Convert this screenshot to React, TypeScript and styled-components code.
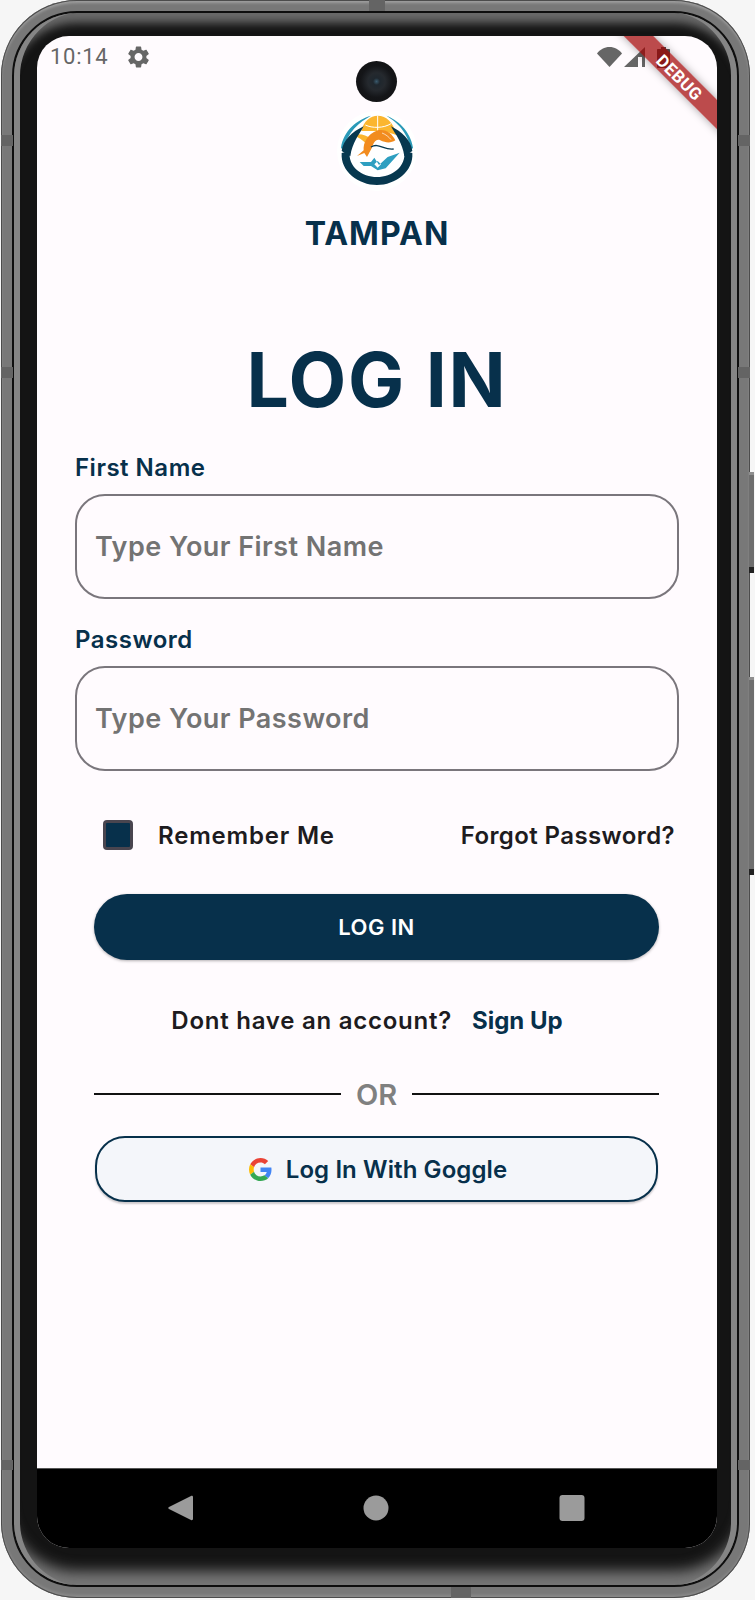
import React from "react";
import styled, { createGlobalStyle } from "styled-components";

const Global = createGlobalStyle`
  html, body { margin: 0; padding: 0; background: #f6f6f6; }
  * { box-sizing: border-box; }
  body { font-family: Inter, "Liberation Sans", sans-serif; }
`;

const Page = styled.div`
  position: relative;
  width: 755px;
  height: 1600px;
  padding: 0 5px 2px 1px;
  overflow: hidden;
  background: #f6f6f6;
`;

const Body = styled.div`
  position: relative;
  height: 100%;
  padding: 11px;
  border-radius: 76px;
  background: #787878;
  box-shadow: inset 0 0 0 1px #4c4c4c, inset 0 3px 3px #a0a0a0, inset 0 -3px 3px #8a8a8a;
`;

const Band = styled.div<{ $x: number; $y: number; $w: number; $h: number }>`
  position: absolute;
  left: ${(p) => p.$x}px;
  top: ${(p) => p.$y}px;
  width: ${(p) => p.$w}px;
  height: ${(p) => p.$h}px;
  background: #646464;
`;

const SideKey = styled.div<{ $y: number; $h: number }>`
  position: absolute;
  left: 749px;
  top: ${(p) => p.$y}px;
  width: 5px;
  height: ${(p) => p.$h}px;
  background: #6e6e6e;
  border-top: 3px solid #8e8e8e;
  border-bottom: 6px solid #222;
`;

const Rim = styled.div`
  height: 100%;
  border: 2px solid #0e0e0e;
  border-radius: 65px;
  background: #141414;
`;

const Bezel = styled.div`
  height: 100%;
  padding: 23px 20px 37px 23px;
  border-radius: 63px;
  background: #141414;
  box-shadow: inset 7px 0 0 -1px #858585, inset -7px 0 0 -1px #858585,
    inset 0 16px 10px -6px #6a6a6a, inset 0 -22px 14px -8px #777;
`;

const Screen = styled.div`
  position: relative;
  display: flex;
  flex-direction: column;
  height: 100%;
  overflow: hidden;
  border-radius: 32px;
  background: #fffbfe;
`;

const StatusBar = styled.div`
  display: flex;
  align-items: center;
  height: 42px;
  padding: 0 0 0 13px;
  color: #666;
  flex: none;
`;

const Clock = styled.span`
  font-family: Roboto, sans-serif;
  font-size: 22px;
  letter-spacing: 0.7px;
  line-height: 40px;
`;

const GearIcon = styled.svg`
  margin-left: 20px;
  width: 21px;
  height: 22px;
  fill: #666;
`;

const StatusRight = styled.div`
  display: flex;
  align-items: center;
  gap: 2px;
  margin-left: auto;
  margin-right: 47px;
`;

const Ribbon = styled.div`
  position: absolute;
  top: 29px;
  right: -61px;
  width: 200px;
  height: 21px;
  padding-left: 5px;
  transform: rotate(45deg);
  display: flex;
  align-items: center;
  justify-content: center;
  background: rgba(160, 0, 0, 0.7);
  box-shadow: 0 0 8px rgba(0, 0, 0, 0.35);
  color: #fff;
  font-family: Roboto, sans-serif;
  font-weight: 700;
  font-size: 17px;
  letter-spacing: 0.5px;
`;

const Camera = styled.div`
  position: absolute;
  top: 25px;
  left: 319px;
  width: 41px;
  height: 41px;
  border-radius: 50%;
  background: radial-gradient(circle at 50% 50%, #3a5a6e 0, #1f272e 12%, #25292e 30%, #141518 55%, #101010 100%);
`;

const Content = styled.main`
  flex: 1;
  display: flex;
  flex-direction: column;
  align-items: center;
  padding: 33px 38px 0;
`;

const LogoMark = styled.svg`
  width: 80px;
  height: 80px;
  flex: none;
`;

const Brand = styled.h2`
  margin: 25px 0 0;
  color: #07304b;
  font-size: 32px;
  font-weight: 700;
  line-height: 36px;
  letter-spacing: 1px;
`;

const Heading = styled.h1`
  margin: 88px 0 0;
  color: #07304b;
  font-size: 75px;
  font-weight: 700;
  line-height: 80px;
  letter-spacing: 1.8px;
`;

const FieldLabel = styled.label<{ $top: number }>`
  align-self: stretch;
  margin-top: ${(p) => p.$top}px;
  color: #07304b;
  font-size: 24px;
  font-weight: 600;
  line-height: 26px;
  letter-spacing: 0.5px;
`;

const Field = styled.div`
  align-self: stretch;
  display: flex;
  align-items: center;
  height: 105px;
  margin-top: 13px;
  padding: 0 18px;
  border: 2px solid #7a767c;
  border-radius: 30px;
  color: #737373;
  font-size: 27px;
  font-weight: 600;
  letter-spacing: 0.45px;
`;

const OptionsRow = styled.div`
  align-self: stretch;
  display: flex;
  align-items: center;
  height: 30px;
  margin-top: 49px;
  padding: 0 4px 0 28px;
  color: #1d1b20;
  font-size: 24px;
  font-weight: 600;
`;

const Check = styled.div`
  width: 30px;
  height: 30px;
  margin-right: 25px;
  border: 3px solid #49454f;
  border-radius: 4px;
  background: #07304b;
`;

const Remember = styled.span`
  letter-spacing: 0.8px;
`;

const Forgot = styled.span`
  margin-left: auto;
  letter-spacing: 0.4px;
`;

const PrimaryButton = styled.button`
  align-self: stretch;
  height: 66px;
  margin: 44px 20px 0 19px;
  border: 0;
  border-radius: 33px;
  background: #07304b;
  box-shadow: 0 1px 3px rgba(0, 0, 0, 0.3);
  color: #fff;
  font-family: inherit;
  font-size: 22px;
  font-weight: 600;
  letter-spacing: 0.5px;
`;

const SignupRow = styled.p`
  display: flex;
  align-items: center;
  gap: 20px;
  margin: 45px 20px 0 0;
  height: 30px;
  color: #1d1b20;
  font-size: 24px;
  font-weight: 600;
  letter-spacing: 0.75px;
`;

const SignupLink = styled.a`
  color: #07304b;
  font-size: 24px;
  font-weight: 700;
  letter-spacing: 0;
`;

const Divider = styled.div`
  align-self: stretch;
  display: flex;
  align-items: center;
  gap: 15px;
  height: 30px;
  margin: 44px 20px 0 19px;
  color: #808080;
  font-size: 29px;
  font-weight: 600;
`;

const Rule = styled.span`
  flex: 1;
  height: 2px;
  background: #111;
`;

const GoogleButton = styled.button`
  align-self: stretch;
  display: flex;
  align-items: center;
  justify-content: center;
  gap: 14px;
  height: 66px;
  margin: 27px 21px 0 20px;
  border: 2px solid #07304b;
  border-radius: 30px;
  background: #f4f6fa;
  box-shadow: 0 2px 2px rgba(0, 0, 0, 0.2);
  color: #07304b;
  font-family: inherit;
  font-size: 24px;
  font-weight: 600;
  letter-spacing: 0.1px;
`;

const GoogleIcon = styled.svg`
  width: 23px;
  height: 23px;
  flex: none;
  margin-left: 3px;
`;

const NavBar = styled.nav`
  flex: none;
  display: flex;
  align-items: center;
  height: 80px;
  padding: 0 132px 2px 130px;
  justify-content: space-between;
  border-top: 1px solid #555;
  background: #000;
`;

const NavIcon = styled.svg`
  width: 26px;
  height: 28px;
  fill: #9b9b9b;
`;

const Wifi = styled.svg`
  width: 25px;
  height: 20px;
  fill: #666;
`;
const Signal = styled.svg`
  width: 21px;
  height: 20px;
  fill: #666;
`;
const Battery = styled.svg`
  width: 13px;
  height: 21px;
  margin-left: 10px;
  fill: #555;
`;

const Logo = () => (
  <LogoMark viewBox="110 180 240 240" aria-hidden>
    <circle cx="230" cy="300" r="120" fill="#fff" />
    <path d="M183 240C190 210 210 194 232 194C258 194 280 215 288 252L250 240L205 240Z" fill="#fbb62f" />
    <path d="M232 194V240M195 222C215 232 250 232 272 218" stroke="#fff" strokeWidth="3" fill="none" />
    <path d="M158 252C178 246 198 252 210 262L198 278C186 266 172 258 158 252Z" fill="#fbb62f" />
    <path d="M122 290C130 238 170 206 212 194C176 214 142 242 128 298Z" fill="#2a9ab8" />
    <path d="M338 290C330 238 290 206 258 194C290 214 322 242 332 298Z" fill="#2a9ab8" />
    <path d="M124 300C128 268 156 242 190 226C176 252 156 274 150 316Z" fill="#07384f" />
    <path d="M336 300C332 268 304 242 272 226C286 252 306 274 312 316Z" fill="#07384f" />
    <path d="M124 306C120 362 175 402 230 402C285 402 340 362 336 306L312 300C318 348 275 378 230 378C185 378 142 348 148 300Z" fill="#07384f" />
    <path d="M170 315L190 298C188 278 200 250 232 238C256 232 276 248 285 268C272 277 256 276 240 268C226 262 220 276 214 292L200 318L192 306Z" fill="#f28c1e" />
    <path d="M245 246C256 250 266 258 272 266" stroke="#fff" strokeWidth="2" fill="none" />
    <path d="M212 288C235 274 250 298 280 294" stroke="#07384f" strokeWidth="4" fill="none" />
    <path fillRule="evenodd" d="M178 333L212 333L222 320L236 342L262 318L298 305L256 352L232 358L212 345L190 345ZM232 330L222 340L232 350L242 340Z" fill="#2e9fc0" />
  </LogoMark>
);

export default function App() {
  return (
    <>
      <Global />
      <Page>
        <Body>
          <Rim>
            <Bezel>
              <Screen>
                <StatusBar>
                  <Clock>10:14</Clock>
                  <GearIcon viewBox="2.5 2 19 20">
                    <path d="M19.14 12.94c.04-.3.06-.61.06-.94 0-.32-.02-.64-.07-.94l2.03-1.58c.18-.14.23-.41.12-.61l-1.92-3.32c-.12-.22-.37-.29-.59-.22l-2.39.96c-.5-.38-1.03-.7-1.62-.94l-.36-2.54c-.04-.24-.24-.41-.48-.41h-3.84c-.24 0-.43.17-.47.41l-.36 2.54c-.59.24-1.13.57-1.62.94l-2.39-.96c-.22-.08-.47 0-.59.22L2.74 8.87c-.12.21-.08.47.12.61l2.03 1.58c-.05.3-.09.63-.09.94s.02.64.07.94l-2.03 1.58c-.18.14-.23.41-.12.61l1.92 3.32c.12.22.37.29.59.22l2.39-.96c.5.38 1.03.7 1.62.94l.36 2.54c.05.24.24.41.48.41h3.84c.24 0 .44-.17.47-.41l.36-2.54c.59-.24 1.13-.56 1.62-.94l2.39.96c.22.08.47 0 .59-.22l1.92-3.32c.12-.22.07-.47-.12-.61l-2.01-1.58zM12 15.6c-1.98 0-3.6-1.62-3.6-3.6s1.62-3.6 3.6-3.6 3.6 1.62 3.6 3.6-1.62 3.6-3.6 3.6z" />
                  </GearIcon>
                  <StatusRight>
                    <Wifi viewBox="0 0 25 20">
                      <path d="M12.5 20L0 6.500C3 2.500 7.500 0 12.500 0S22 2.500 25 6.500Z" />
                    </Wifi>
                    <Signal viewBox="0 0 21 20">
                      <path d="M0 20L21 0V20H18V10H14V20Z" />
                    </Signal>
                    <Battery viewBox="0 0 13 21">
                      <path d="M4 0H9V2H12C12.600 2 13 2.400 13 3V20C13 20.600 12.600 21 12 21H1C.4 21 0 20.600 0 20V3C0 2.400 .4 2 1 2H4Z" />
                    </Battery>
                  </StatusRight>
                </StatusBar>
                <Ribbon>DEBUG</Ribbon>
                <Camera />
                <Content>
                  <Logo />
                  <Brand>TAMPAN</Brand>
                  <Heading>LOG IN</Heading>
                  <FieldLabel $top={35}>First Name</FieldLabel>
                  <Field>Type Your First Name</Field>
                  <FieldLabel $top={28}>Password</FieldLabel>
                  <Field>Type Your Password</Field>
                  <OptionsRow>
                    <Check />
                    <Remember>Remember Me</Remember>
                    <Forgot>Forgot Password?</Forgot>
                  </OptionsRow>
                  <PrimaryButton>LOG IN</PrimaryButton>
                  <SignupRow>
                    <span>Dont have an account?</span>
                    <SignupLink>Sign Up</SignupLink>
                  </SignupRow>
                  <Divider>
                    <Rule />
                    <span>OR</span>
                    <Rule />
                  </Divider>
                  <GoogleButton>
                    <GoogleIcon viewBox="0 0 48 48">
                      <path fill="#EA4335" d="M24 9.500c3.540 0 6.710 1.220 9.210 3.600l6.850-6.850C35.900 2.380 30.470 0 24 0 14.620 0 6.510 5.380 2.560 13.220l7.980 6.190C12.430 13.720 17.740 9.500 24 9.500z" />
                      <path fill="#4285F4" d="M46.980 24.550c0-1.570-.15-3.090-.38-4.550H24v9.020h12.940c-.58 2.960-2.260 5.480-4.780 7.180l7.730 6c4.510-4.180 7.090-10.360 7.090-17.650z" />
                      <path fill="#FBBC05" d="M10.530 28.590c-.48-1.450-.76-2.990-.76-4.590s.27-3.140.76-4.590l-7.980-6.190C.92 16.460 0 20.120 0 24c0 3.880.92 7.540 2.560 10.780l7.970-6.190z" />
                      <path fill="#34A853" d="M24 48c6.480 0 11.930-2.130 15.890-5.810l-7.730-6c-2.150 1.450-4.920 2.300-8.160 2.300-6.260 0-11.570-4.220-13.470-9.910l-7.980 6.190C6.510 42.620 14.620 48 24 48z" />
                    </GoogleIcon>
                    Log In With Goggle
                  </GoogleButton>
                </Content>
                <NavBar>
                  <NavIcon viewBox="0 0 26 28">
                    <path d="M24 2C25 1.500 26 2 26 3V25C26 26 25 26.500 24 26L2 15C1 14.500 1 13.500 2 13Z" />
                  </NavIcon>
                  <NavIcon viewBox="0 0 26 28">
                    <circle cx="13" cy="14" r="12.500" />
                  </NavIcon>
                  <NavIcon viewBox="0 0 26 28">
                    <rect x="0.500" y="1" width="25" height="26" rx="3" />
                  </NavIcon>
                </NavBar>
              </Screen>
            </Bezel>
          </Rim>
          <Band $x={0} $y={135} $w={12} $h={11} />
          <Band $x={0} $y={367} $w={12} $h={11} />
          <Band $x={0} $y={1460} $w={12} $h={10} />
          <Band $x={737} $y={135} $w={12} $h={11} />
          <Band $x={737} $y={367} $w={12} $h={11} />
          <Band $x={737} $y={1460} $w={12} $h={10} />
          <Band $x={368} $y={0} $w={16} $h={11} />
          <Band $x={450} $y={1587} $w={20} $h={11} />
        </Body>
        <SideKey $y={472} $h={101} />
        <SideKey $y={677} $h={198} />
      </Page>
    </>
  );
}
